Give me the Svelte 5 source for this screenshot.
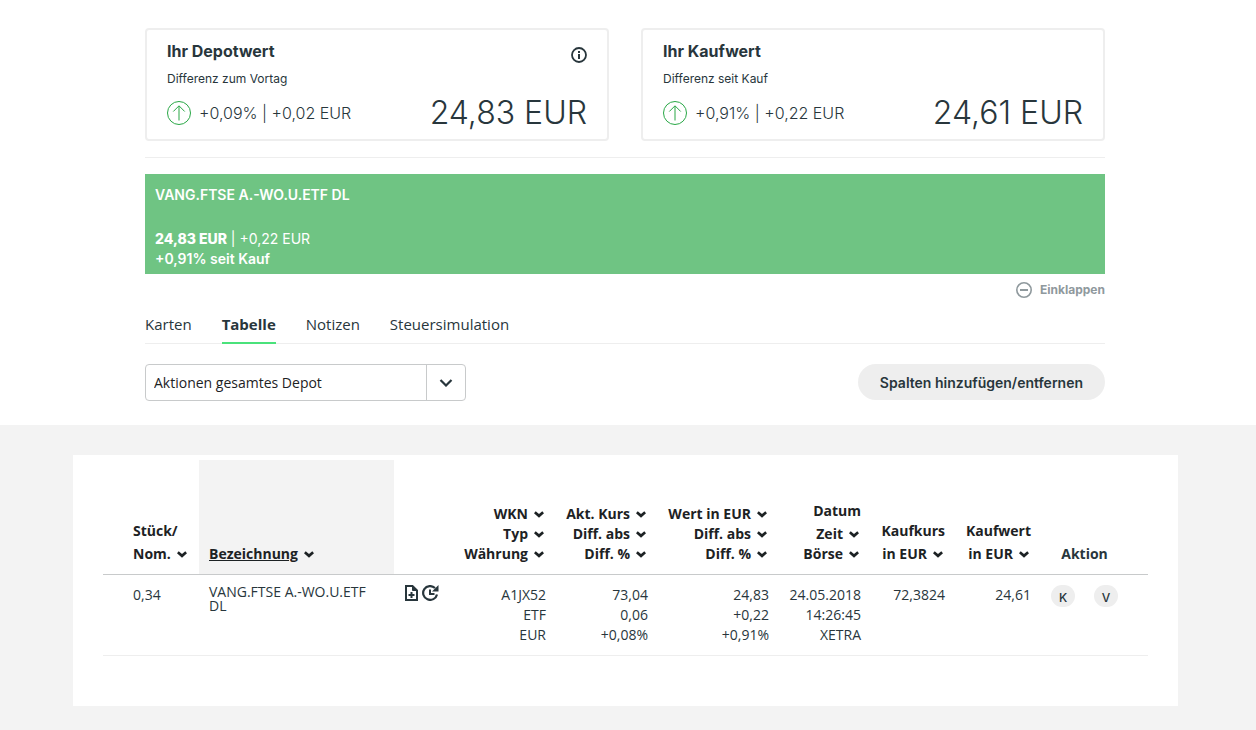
<script>
    let cards = [
        { title: "Ihr Depotwert", label: "Differenz zum Vortag", diff: "+0,09% | +0,02 EUR", total: "24,83 EUR", info: true },
        { title: "Ihr Kaufwert", label: "Differenz seit Kauf", diff: "+0,91% | +0,22 EUR", total: "24,61 EUR", info: false }
    ];

    let tabs = ["Karten", "Tabelle", "Notizen", "Steuersimulation"];
    let activeTab = "Tabelle";
    let action = "Aktionen gesamtes Depot";

    // sort: false means the line is only text
    let columns = [
        { name: "amount", lines: [{ text: "Stück/", sort: false }, { text: "Nom.", sort: true }] },
        { name: "title", lines: [{ text: "Bezeichnung", sort: true }] },
        { name: "tools", lines: [] },
        { name: "wkn", lines: [{ text: "WKN", sort: true }, { text: "Typ", sort: true }, { text: "Währung", sort: true }] },
        { name: "price", lines: [{ text: "Akt. Kurs", sort: true }, { text: "Diff. abs", sort: true }, { text: "Diff. %", sort: true }] },
        { name: "value", lines: [{ text: "Wert in EUR", sort: true }, { text: "Diff. abs", sort: true }, { text: "Diff. %", sort: true }] },
        { name: "date", lines: [{ text: "Datum", sort: false }, { text: "Zeit", sort: true }, { text: "Börse", sort: true }] },
        { name: "buyprice", lines: [{ text: "Kaufkurs", sort: false }, { text: "in EUR", sort: true }] },
        { name: "buyvalue", lines: [{ text: "Kaufwert", sort: false }, { text: "in EUR", sort: true }] }
    ];

    let rows = [
        {
            amount: "0,34",
            title: "VANG.FTSE A.-WO.U.ETF DL",
            cells: [
                ["A1JX52", "ETF", "EUR"],
                ["73,04", "0,06", "+0,08%"],
                ["24,83", "+0,22", "+0,91%"],
                ["24.05.2018", "14:26:45", "XETRA"],
                ["72,3824"],
                ["24,61"]
            ]
        }
    ];
</script>

<main>
    <div class="top">
        <div class="container">
            <div class="cards">
                {#each cards as card}
                    <section class="card">
                        <div class="card-head">
                            <div>
                                <h2>{card.title}</h2>
                                <p>{card.label}</p>
                            </div>
                            {#if card.info}
                                <button class="info" aria-label="Information">
                                    <svg width="16" height="16" viewBox="0 0 16 16">
                                        <circle cx="8" cy="8" r="7" fill="none" stroke="currentColor" stroke-width="1.8" />
                                        <path d="M7 4h2v2H7zM7 7h2v5H7z" fill="currentColor" />
                                    </svg>
                                </button>
                            {/if}
                        </div>
                        <div class="card-values">
                            <svg class="arrow" width="24" height="24" viewBox="0 0 24 24" fill="none" stroke="currentColor">
                                <circle cx="12" cy="12" r="11.5" />
                                <path d="M12 19.5V5M6.300 10.500L12 4.800l5.700 5.700" />
                            </svg>
                            <span class="diff">{card.diff}</span>
                            <span class="total">{card.total}</span>
                        </div>
                    </section>
                {/each}
            </div>

            <hr>

            <div class="tile">
                <p class="tile-name">VANG.FTSE A.-WO.U.ETF DL</p>
                <p><b>24,83 EUR</b> | +0,22 EUR</p>
                <p class="since">+0,91% seit Kauf</p>
            </div>

            <div class="collapse">
                <button>
                    <svg width="16" height="16" viewBox="0 0 16 16" fill="none" stroke="currentColor" stroke-width="1.6">
                        <circle cx="8" cy="8" r="7.2" />
                        <path d="M4 8h8" stroke-width="2" />
                    </svg>
                    Einklappen
                </button>
            </div>

            <nav>
                {#each tabs as tab}
                    <a href="#{tab}" class:active={tab == activeTab} on:click|preventDefault={() => activeTab = tab}>{tab}</a>
                {/each}
            </nav>

            <div class="toolbar">
                <div class="dropdown">
                    <select aria-label="Aktionen" bind:value={action}>
                        <option>Aktionen gesamtes Depot</option>
                    </select>
                    <span class="dropdown-arrow">
                        <svg width="14" height="8" viewBox="0 0 14 8">
                            <path d="M1.500 1l5.500 5.500L12.500 1" fill="none" stroke="currentColor" stroke-width="2.200" />
                        </svg>
                    </span>
                </div>
                <button class="pill">Spalten hinzufügen/entfernen</button>
            </div>
        </div>
    </div>

    <div class="bottom">
        <div class="panel">
            <table>
                <thead>
                    <tr>
                        {#each columns as column}
                            <th class={column.name}>
                                {#each column.lines as line}
                                    {#if line.sort}
                                        <button class="sort">
                                            <span>{line.text}</span>
                                            <svg width="10" height="7" viewBox="0 0 10 7">
                                                <path d="M.8 1.200L5 4.800l4.200-3.600" fill="none" stroke="currentColor" stroke-width="2.800" />
                                            </svg>
                                        </button>
                                    {:else}
                                        <span class="plain">{line.text}</span>
                                    {/if}
                                {/each}
                            </th>
                        {/each}
                        <th class="actions">Aktion</th>
                    </tr>
                </thead>
                <tbody>
                    {#each rows as row}
                        <tr>
                            <td class="amount">{row.amount}</td>
                            <td class="title">{row.title}</td>
                            <td class="tools">
                                <div class="icons">
                                    <button aria-label="Notiz">
                                        <svg width="13" height="16" viewBox="0 0 13 16" fill="none" stroke="currentColor" stroke-width="2">
                                            <path d="M1 1h6.500L12 5.500V15H1z" />
                                            <path d="M7.500 1v4.500H12z" fill="currentColor" stroke-width="1" />
                                            <path d="M6.500 7v6M3.500 10h6" />
                                        </svg>
                                    </button>
                                    <button aria-label="Historie">
                                        <svg width="17" height="16" viewBox="0 0 17 16" fill="none" stroke="currentColor" stroke-width="2.200">
                                            <path d="M13 3A7 6.900 0 1 0 15 9.500" />
                                            <path d="M8 4.500V9h4.500" stroke-width="2" />
                                            <path d="M16.500 0v6.500H10z" fill="currentColor" stroke="none" />
                                        </svg>
                                    </button>
                                </div>
                            </td>
                            {#each row.cells as cell}
                                <td>
                                    {#each cell as line}
                                        <div>{line}</div>
                                    {/each}
                                </td>
                            {/each}
                            <td class="actions">
                                <div class="trade">
                                    <button aria-label="Kaufen">K</button>
                                    <button aria-label="Verkaufen">V</button>
                                </div>
                            </td>
                        </tr>
                    {/each}
                </tbody>
            </table>
        </div>
    </div>
</main>

<style>
    :global(body) {
        margin: 0;
        background-color: #f3f3f3;
    }
    main {
        color: #28363c;
        font-family: "Open Sans", sans-serif;
        font-size: 14px;
        line-height: 20px;
    }
    h2, p {
        margin: 0;
    }
    button {
        padding: 0;
        border: none;
        background: none;
        color: inherit;
        font: inherit;
        cursor: pointer;
    }
    svg {
        display: block;
        flex: none;
    }
    .top {
        padding: 28px 6px 24px 0;
        background-color: white;
    }
    .container {
        max-width: 960px;
        margin: 0 auto;
    }
    .cards {
        display: grid;
        grid-template-columns: 1fr 1fr;
        gap: 32px;
        font-family: Inter, sans-serif;
    }
    .card {
        padding: 11px 20px 9px;
        border: 2px solid #eeeeee;
        border-radius: 4px;
    }
    .card-head {
        display: flex;
        justify-content: space-between;
        align-items: flex-start;
    }
    .card h2 {
        font-size: 16px;
        font-weight: 700;
    }
    .card p {
        padding: 8px 0 7px;
        font-size: 12px;
    }
    .info {
        padding-top: 6px;
    }
    .card-values {
        display: flex;
        align-items: center;
        height: 34px;
    }
    .arrow {
        margin-right: 8px;
        color: #28a745;
    }
    .diff {
        font-size: 16px;
        font-weight: 300;
    }
    .total {
        margin-left: auto;
        font-size: 32px;
        font-weight: 300;
    }
    hr {
        height: 1px;
        margin: 16px 0;
        border: none;
        background-color: #eeeeee;
    }
    .tile {
        padding: 11px 10px 5px;
        background-color: #6fc483;
        color: white;
        font-family: Inter, sans-serif;
    }
    .tile-name {
        padding-bottom: 24px;
        font-weight: 600;
    }
    .tile b {
        font-weight: 800;
    }
    .since {
        font-weight: 600;
    }
    .collapse {
        display: flex;
        justify-content: flex-end;
        padding: 6px 0 9px;
    }
    .collapse button {
        display: flex;
        align-items: center;
        gap: 8px;
        color: #8f999d;
        font-family: Inter, sans-serif;
        font-size: 12px;
        font-weight: 700;
    }
    nav {
        display: flex;
        gap: 30px;
        border-bottom: 1px solid #eeeeee;
        font-size: 15px;
    }
    nav a {
        margin-bottom: -1px;
        padding: 5px 0 8px;
        border-bottom: 2px solid transparent;
        color: inherit;
        text-decoration: none;
    }
    nav .active {
        border-color: #4ae27b;
        font-weight: 700;
    }
    .toolbar {
        display: flex;
        justify-content: space-between;
        align-items: flex-start;
        padding-top: 20px;
    }
    .dropdown {
        display: grid;
        grid-template-columns: 1fr 40px;
        width: 321px;
    }
    select {
        grid-area: 1 / 1 / 2 / 3;
        height: 37px;
        padding: 0 48px 0 8px;
        border: 1px solid #c8cacb;
        border-radius: 4px;
        appearance: none;
        background-color: white;
        color: #1d2224;
        font: inherit;
    }
    .dropdown-arrow {
        grid-area: 1 / 2;
        display: flex;
        align-items: center;
        justify-content: center;
        margin: 1px 1px 1px 0;
        border-left: 1px solid #c8cacb;
        pointer-events: none;
    }
    .pill {
        height: 36px;
        padding: 2px 22px 0;
        border-radius: 18px;
        background-color: #eeeeee;
        font-family: Inter, sans-serif;
        font-weight: 600;
    }
    .bottom {
        padding: 30px 78px 24px 73px;
    }
    .panel {
        padding: 5px 30px 50px;
        background-color: white;
    }
    table {
        width: 100%;
        border-collapse: separate;
        border-spacing: 0;
        table-layout: fixed;
    }
    th, td {
        box-sizing: border-box;
        text-align: right;
    }
    th {
        height: 115px;
        padding: 0 10px 10px 0;
        border-bottom: 1px solid #c8cacb;
        color: #1d2224;
        vertical-align: bottom;
        white-space: nowrap;
    }
    td {
        padding: 10px 10px 10px 0;
        border-bottom: 1px solid #eeeeee;
        vertical-align: top;
    }
    .sort {
        display: flex;
        align-items: center;
        justify-content: flex-end;
        gap: 6px;
        width: 100%;
        padding-right: 2px;
    }
    .plain {
        display: block;
        padding-bottom: 3px;
    }
    .amount {
        width: 96px;
        padding-left: 30px;
        text-align: left;
    }
    .title {
        width: 195px;
        padding-left: 10px;
        text-align: left;
    }
    .amount .sort, .title .sort {
        justify-content: flex-start;
    }
    th.title {
        background-color: #f3f3f3;
    }
    th.title span {
        text-decoration: underline;
    }
    td.title {
        padding-right: 20px;
        line-height: 14px;
    }
    .tools {
        width: 61px;
        padding-left: 11px;
    }
    .wkn {
        width: 101px;
    }
    .price {
        width: 102px;
    }
    .value {
        width: 121px;
    }
    .date {
        width: 92px;
    }
    .buyprice {
        width: 84px;
    }
    .buyvalue {
        width: 86px;
    }
    .actions {
        width: 107px;
        padding-right: 30px;
        padding-left: 10px;
    }
    th.actions {
        color: inherit;
        text-align: center;
    }
    .icons {
        display: flex;
        gap: 4px;
    }
    .trade {
        display: flex;
        justify-content: space-between;
    }
    .trade button {
        width: 24px;
        height: 22px;
        padding-top: 3px;
        border-radius: 12px;
        background-color: #eeeeee;
        font-family: Inter, sans-serif;
        font-size: 12px;
        font-weight: 500;
    }
</style>
